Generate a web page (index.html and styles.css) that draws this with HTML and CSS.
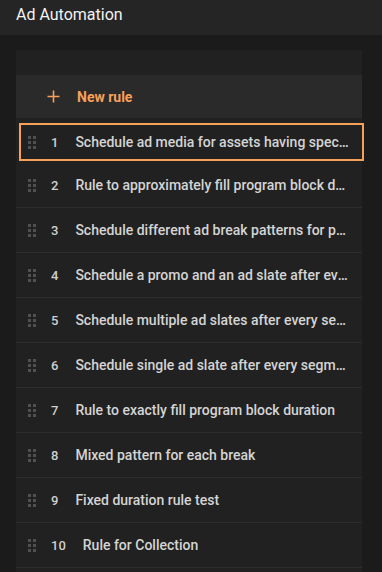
FILE: index.html
```html
<!DOCTYPE html>
<html lang="en">
<head>
  <meta charset="UTF-8" />
  <meta name="viewport" content="width=device-width, initial-scale=1.0"/>
  <title>Ad Automation</title>
  <link rel="stylesheet" href="styles.css">
</head>
<body>

  <div class="header">Ad Automation</div>

  <div class="main">
    <div class="panel">
      <div class="new-rule">
        <svg class="plus" width="13" height="13" viewBox="0 0 13 13">
          <path d="M6.5 0.5v12M0.5 6.5h12" stroke="#f6a05a" stroke-width="1.6" fill="none"/>
        </svg>
        <span>New rule</span>
      </div>

      <div class="rules">
        <div class="rule selected">
          <span class="handle"><i></i><i></i><i></i><i></i><i></i><i></i></span>
          <span class="num">1</span>
          <span class="name">Schedule ad media for assets having specific metadata values</span>
        </div>
        <div class="rule">
          <span class="handle"><i></i><i></i><i></i><i></i><i></i><i></i></span>
          <span class="num">2</span>
          <span class="name">Rule to approximately fill program block duration</span>
        </div>
        <div class="rule">
          <span class="handle"><i></i><i></i><i></i><i></i><i></i><i></i></span>
          <span class="num">3</span>
          <span class="name">Schedule different ad break patterns for parts</span>
        </div>
        <div class="rule">
          <span class="handle"><i></i><i></i><i></i><i></i><i></i><i></i></span>
          <span class="num">4</span>
          <span class="name">Schedule a promo and an ad slate after every segment</span>
        </div>
        <div class="rule">
          <span class="handle"><i></i><i></i><i></i><i></i><i></i><i></i></span>
          <span class="num">5</span>
          <span class="name">Schedule multiple ad slates after every segment</span>
        </div>
        <div class="rule">
          <span class="handle"><i></i><i></i><i></i><i></i><i></i><i></i></span>
          <span class="num">6</span>
          <span class="name">Schedule single ad slate after every segment</span>
        </div>
        <div class="rule">
          <span class="handle"><i></i><i></i><i></i><i></i><i></i><i></i></span>
          <span class="num">7</span>
          <span class="name">Rule to exactly fill program block duration</span>
        </div>
        <div class="rule">
          <span class="handle"><i></i><i></i><i></i><i></i><i></i><i></i></span>
          <span class="num">8</span>
          <span class="name">Mixed pattern for each break</span>
        </div>
        <div class="rule">
          <span class="handle"><i></i><i></i><i></i><i></i><i></i><i></i></span>
          <span class="num">9</span>
          <span class="name">Fixed duration rule test</span>
        </div>
        <div class="rule">
          <span class="handle"><i></i><i></i><i></i><i></i><i></i><i></i></span>
          <span class="num">10</span>
          <span class="name">Rule for Collection</span>
        </div>
      </div>
    </div>
  </div>

</body>
</html>
```

FILE: styles.css
```css
body {
  margin: 0;
  height: 572px;
  overflow: hidden;
  background: #1b1b1b;
  font-family: Roboto, "Liberation Sans", sans-serif;
  color: #d6d6d6;
}

.header {
  height: 35px;
  padding: 0 16px;
  background: #252525;
  color: #f2f2f2;
  font-size: 16px;
  line-height: 29px;
  box-sizing: border-box;
}

.main {
  padding: 15px 20px 0 16px;
}

.panel {
  background: #212121;
  padding-top: 25px;
  height: 497px;
  overflow-x: visible;
  overflow-y: clip;
}

.new-rule {
  display: flex;
  align-items: center;
  height: 43px;
  padding-left: 31px;
  background: #2a2a2a;
  color: #f6a05a;
  font-size: 14px;
  font-weight: 700;
}

.new-rule .plus {
  margin-right: 17px;
}

.rule {
  display: flex;
  align-items: center;
  height: 45px;
  padding: 0 10px 0 12px;
  border-bottom: 1px solid #2d2d2d;
  box-sizing: border-box;
  font-size: 14px;
  font-weight: 500;
}

.rule.selected {
  height: 38px;
  margin: 5px -2px 2px 3px;
  padding-left: 7px;
  border: 2px solid #f6a05a;
}

.handle {
  display: grid;
  grid-template-columns: repeat(2, 3px);
  gap: 2px;
  margin-right: 15px;
}

.handle i {
  width: 3px;
  height: 3px;
  background: #505050;
}

.num {
  margin-right: 17px;
  color: #cfcfcf;
  font-size: 13px;
}

.name {
  flex: 1;
  min-width: 0;
  white-space: nowrap;
  overflow: hidden;
  text-overflow: ellipsis;
  color: #d4d4d4;
}
```
